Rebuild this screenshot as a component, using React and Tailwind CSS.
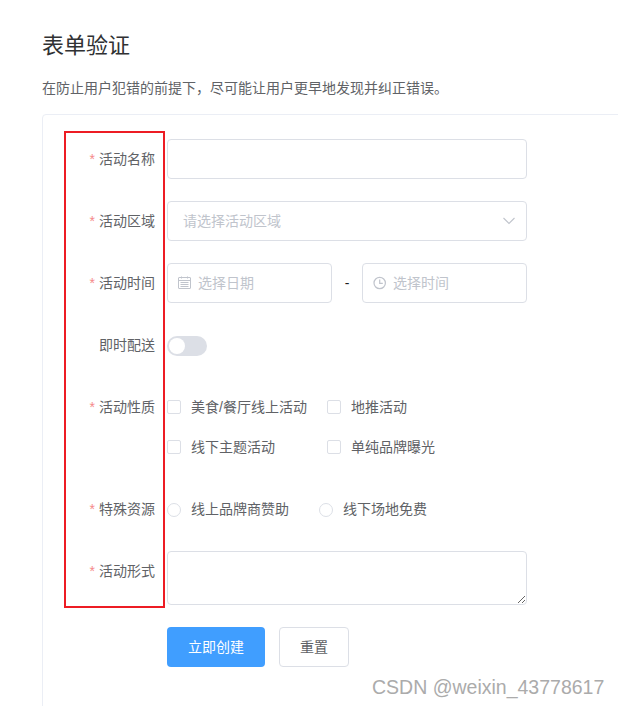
import React from "react";

const FONT = "[font-family:'Liberation_Sans','Noto_Sans_CJK_SC',sans-serif]";

function Row({ label, required = true, children, className = "" }) {
  return (
    <div className={`flex mb-[22px] ${className}`}>
      <div className="w-[100px] shrink-0 pr-3 text-right text-sm leading-10 text-[#606266]">
        {required && <span className="text-[#f58a8a] mr-1">*</span>}
        {label}
      </div>
      <div className="w-[360px] shrink-0">{children}</div>
    </div>
  );
}

function Check({ label }) {
  return (
    <div className="flex items-center h-10 text-sm text-[#606266]">
      <span className="w-3.5 h-3.5 border border-[#dcdfe6] rounded-[2px] bg-white mr-2.5 shrink-0" />
      <span>{label}</span>
    </div>
  );
}

function Radio({ label }) {
  return (
    <div className="flex items-center h-10 text-sm text-[#606266]">
      <span className="w-3.5 h-3.5 mt-0.5 border border-[#dcdfe6] rounded-full bg-white mr-2.5 shrink-0" />
      <span>{label}</span>
    </div>
  );
}

function CalendarIcon() {
  return (
    <svg width="14" height="14" viewBox="0 0 14 14" fill="none" stroke="#c0c4cc" strokeWidth="1" className="shrink-0">
      <rect x="0.5" y="1.5" width="12" height="11" rx="0.5" />
      <path d="M0.5 4.5h12M3.5 0.5v2M9.5 0.5v2M2.5 6.5h8M2.5 8.5h8M2.5 10.5h8" />
    </svg>
  );
}

function ClockIcon() {
  return (
    <svg width="14" height="14" viewBox="0 0 14 14" fill="none" stroke="#c0c4cc" strokeWidth="1.2" className="shrink-0">
      <circle cx="6.7" cy="7" r="5.7" />
      <path d="M6.7 3.4V7.4H9.8" />
    </svg>
  );
}

function Chevron() {
  return (
    <svg width="12" height="8" viewBox="0 0 12 8" fill="none" stroke="#c0c4cc" strokeWidth="1.1">
      <path d="M0.5 1L6 6.5L11.5 1" />
    </svg>
  );
}

export default function App() {
  return (
    <div className={`relative w-[618px] h-[706px] overflow-hidden bg-white ${FONT}`}>
      <div className="pl-[42px] pt-[31px]">
        <h1 className="text-[22px] leading-[30px] font-normal text-[#303133]">表单验证</h1>
        <p className="mt-[17px] text-sm leading-5 text-[#606266]">
          在防止用户犯错的前提下，尽可能让用户更早地发现并纠正错误。
        </p>
        <div className="mt-4 w-[700px] h-[700px] border border-[#ebeef5] rounded-[4px] pt-6 pl-6">
          <Row label="活动名称">
            <input className="block w-full h-10 border border-[#dcdfe6] rounded-[4px] bg-white outline-none" />
          </Row>
          <Row label="活动区域">
            <div className="flex items-center justify-between h-10 border border-[#dcdfe6] rounded-[4px] pl-[15px] pr-[11px]">
              <span className="text-sm text-[#c0c4cc]">请选择活动区域</span>
              <Chevron />
            </div>
          </Row>
          <Row label="活动时间">
            <div className="flex items-center">
              <div className="flex items-center gap-[6px] w-[165px] h-10 border border-[#dcdfe6] rounded-[4px] pl-[10px] text-sm text-[#c0c4cc]">
                <CalendarIcon />
                <span>选择日期</span>
              </div>
              <div className="w-[30px] text-center text-sm text-[#1f1f1f]">-</div>
              <div className="flex items-center gap-[6px] w-[165px] h-10 border border-[#dcdfe6] rounded-[4px] pl-[10px] text-sm text-[#c0c4cc]">
                <ClockIcon />
                <span>选择时间</span>
              </div>
            </div>
          </Row>
          <Row label="即时配送" required={false}>
            <div className="flex items-center h-10 pt-0.5">
              <span className="flex items-center w-10 h-5 rounded-full bg-[#dcdfe6] pl-0.5">
                <span className="w-4 h-4 rounded-full bg-white" />
              </span>
            </div>
          </Row>
          <Row label="活动性质">
            <div className="grid grid-cols-[160px_1fr]">
              <Check label="美食/餐厅线上活动" />
              <Check label="地推活动" />
              <Check label="线下主题活动" />
              <Check label="单纯品牌曝光" />
            </div>
          </Row>
          <Row label="特殊资源">
            <div className="flex gap-[30px]">
              <Radio label="线上品牌商赞助" />
              <Radio label="线下场地免费" />
            </div>
          </Row>
          <Row label="活动形式">
            <textarea className="block w-full h-[54px] border border-[#dcdfe6] rounded-[4px] bg-white outline-none resize-y" />
          </Row>
          <div className="flex pl-[100px]">
            <button className="w-[98px] h-10 rounded-[4px] bg-[#409eff] text-sm text-white">立即创建</button>
            <button className="ml-[14px] w-[70px] h-10 rounded-[4px] border border-[#dcdfe6] bg-white text-sm text-[#606266]">重置</button>
          </div>
        </div>
      </div>
      <div className="absolute left-[64px] top-[131px] w-[101px] h-[477px] border-2 border-[#ed1c24] pointer-events-none" />
      <div className="absolute left-[372px] top-[675px] text-[19.5px] leading-[24px] text-[#ababab] whitespace-nowrap">
        CSDN @weixin_43778617
      </div>
    </div>
  );
}
